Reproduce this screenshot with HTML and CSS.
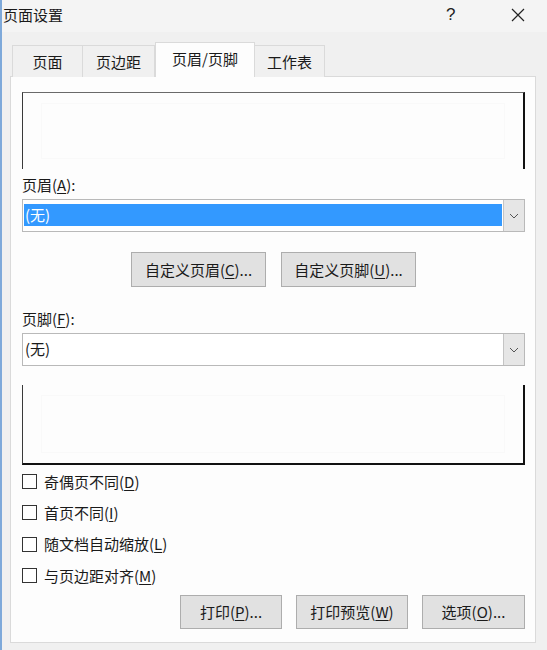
FILE: index.html
```html
<!DOCTYPE html>
<html lang="zh-CN">
<head>
<meta charset="utf-8">
<title>页面设置</title>
<link rel="stylesheet" href="styles.css">
</head>
<body>
<div class="window">
  <div class="titlebar">
    <span class="title">页面设置</span>
    <span class="help">?</span>
    <span class="close">
      <svg width="16" height="16" viewBox="0 0 16 16"><path d="M2 2 L14 14 M14 2 L2 14" stroke="#222" stroke-width="1.2" fill="none"/></svg>
    </span>
  </div>
  <div class="tabs">
    <div class="tab t1">页面</div>
    <div class="tab t2">页边距</div>
    <div class="tab t3 active">页眉/页脚</div>
    <div class="tab t4">工作表</div>
  </div>
  <div class="panel">
    <div class="preview preview-top"><div class="inner"></div></div>
    <div class="label label-header">页眉(<u>A</u>):</div>
    <div class="select">
      <div class="value selected">(无)</div>
      <div class="arrow"><svg width="10" height="6" viewBox="0 0 10 6"><path d="M1 1 L5 5 L9 1" stroke="#555" stroke-width="1" fill="none"/></svg></div>
    </div>
    <div class="custom-row">
      <div class="btn btn-custom">自定义页眉(<u>C</u>)...</div>
      <div class="btn btn-custom">自定义页脚(<u>U</u>)...</div>
    </div>
    <div class="label label-footer">页脚(<u>F</u>):</div>
    <div class="select">
      <div class="value">(无)</div>
      <div class="arrow"><svg width="10" height="6" viewBox="0 0 10 6"><path d="M1 1 L5 5 L9 1" stroke="#555" stroke-width="1" fill="none"/></svg></div>
    </div>
    <div class="preview preview-bottom"><div class="inner"></div></div>
    <div class="checks">
      <div class="check"><span class="box"></span>奇偶页不同(<u>D</u>)</div>
      <div class="check"><span class="box"></span>首页不同(<u>I</u>)</div>
      <div class="check"><span class="box"></span>随文档自动缩放(<u>L</u>)</div>
      <div class="check"><span class="box"></span>与页边距对齐(<u>M</u>)</div>
    </div>
    <div class="actions">
      <div class="btn btn-print">打印(<u>P</u>)...</div>
      <div class="btn btn-preview">打印预览(<u>W</u>)</div>
      <div class="btn btn-options">选项(<u>O</u>)...</div>
    </div>
  </div>
</div>
</body>
</html>
```
FILE: styles.css
```css
* { box-sizing: border-box; }
html, body { margin: 0; padding: 0; }
body {
  width: 547px;
  height: 650px;
  overflow: hidden;
  font-family: "Noto Sans CJK SC", "Microsoft YaHei", sans-serif;
  font-size: 15px;
  color: #1a1a1a;
  background: #f0f0f0;
}
u { text-decoration: underline; text-underline-offset: 2px; text-decoration-thickness: 1px; }
.window {
  height: 650px;
  background: #f0f0f0;
  border-left: 2px solid #7ea9da;
  display: flex;
  flex-direction: column;
}
.titlebar {
  height: 32px;
  display: flex;
  align-items: center;
  background: #f4f4f4;
  padding-left: 1px;
}
.title { font-size: 15px; line-height: 20px; flex: 1; margin-top: -2px; }
.help { font-family: "Liberation Sans", sans-serif; font-size: 17px; width: 14px; margin-right: 50px; margin-top: -2px; color: #222; }
.close { width: 16px; height: 16px; margin-right: 21px; margin-top: -2px; display: flex; }
.tabs {
  display: flex;
  align-items: flex-end;
  height: 44px;
  padding-left: 10px;
  background: #f0f0f0;
  position: relative;
  z-index: 2;
}
.tab {
  height: 32px;
  display: flex;
  align-items: center;
  justify-content: center;
  border: 1px solid #dadada;
  border-bottom: none;
  background: #f0f0f0;
  margin-bottom: -1px;
  line-height: 20px;
}
.tab + .tab { border-left: none; }
.t1 { width: 71px; }
.t2 { width: 72px; }
.t3 { width: 100px; }
.t4 { width: 70px; }
.tab.active {
  height: 35px;
  background: #fdfdfd;
  border-left: 1px solid #dadada;
  border-right: 1px solid #dadada;
  padding-bottom: 3px;
}
.tab.active + .tab { border-left: none; }
.panel {
  margin: 0 11px 0 8px;
  height: 567px;
  background: #fdfdfd;
  border: 1px solid #dadada;
  padding: 15px 10px 0 11px;
  display: flex;
  flex-direction: column;
}
.preview {
  position: relative;
  background: #fdfdfd;
}
.preview-top {
  height: 77px;
  border-top: 1px solid #6a6a6a;
  border-left: 1px solid #3a3a3a;
  border-right: 2px solid #111;
}
.preview-bottom {
  height: 80px;
  margin-top: 19px;
  border-bottom: 2px solid #111;
  border-left: 1px solid #3a3a3a;
  border-right: 2px solid #111;
}
.preview .inner {
  margin: 10px 18px;
  height: calc(100% - 20px);
  border: 1px solid #f9f9f9;
}
.label { line-height: 20px; height: 20px; }
.label-header { margin-top: 6px; }
.label-footer { margin-top: 22px; }
.select {
  display: flex;
  height: 33px;
  margin-top: 4px;
  border: 1px solid #b9b9b9;
  background: #fff;
}
.label-footer + .select { margin-top: 4px; }
.value {
  flex: 1;
  display: flex;
  align-items: center;
  margin: 4px 1px 5px 1px;
  padding-left: 1px;
  line-height: 20px;
}
.value.selected { background: #3399ff; color: #fff; }
.arrow {
  width: 21px;
  background: #e6e6e6;
  border-left: 1px solid #c4c4c4;
  display: flex;
  align-items: center;
  justify-content: center;
}
.btn {
  height: 35px;
  background: #e1e1e1;
  border: 1px solid #adadad;
  display: flex;
  align-items: center;
  justify-content: center;
  line-height: 20px;
}
.custom-row {
  display: flex;
  justify-content: center;
  gap: 15px;
  margin-top: 20px;
}
.btn-custom { width: 135px; }
.checks { margin-top: 1px; display: flex; flex-direction: column; }
.check {
  height: 31.3px;
  display: flex;
  align-items: center;
  line-height: 20px;
}
.box {
  width: 15px;
  height: 15px;
  border: 1px solid #333;
  background: #fff;
  margin-right: 7px;
}
.actions {
  display: flex;
  justify-content: flex-end;
  gap: 14px;
  margin-top: 4px;
}
.actions .btn { height: 34px; }
.btn-print { width: 102px; }
.btn-preview { width: 112px; }
.btn-options { width: 103px; }
```
